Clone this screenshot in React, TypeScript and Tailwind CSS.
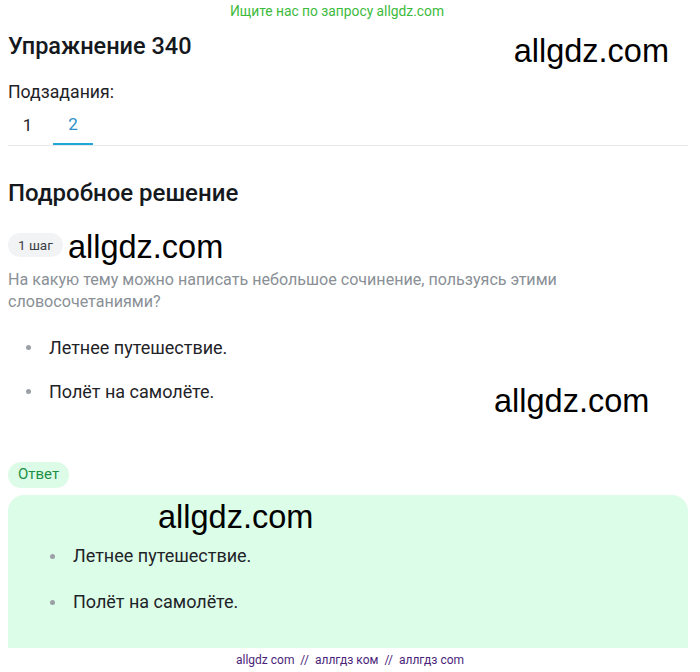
export default function App() {
  const wm = "font-['Liberation_Sans',Arial,sans-serif] text-[32.5px] leading-none text-black";
  const dot = "w-[5px] h-[5px] rounded-full bg-[#9aa0a6] mr-[18px] shrink-0";
  return (
    <div className="relative w-[700px] h-[672px] overflow-hidden bg-white font-['Roboto',sans-serif] text-[#1f2328]">
      <div className="h-[22px] flex items-center justify-center pr-[26px] text-[13.8px] text-[#3dbb3d]">
        Ищите нас по запросу allgdz.com
      </div>
      <div className="px-2">
        <div className="flex items-center justify-between h-[50px]">
          <h1 className="text-[23.5px] font-medium text-[#15191e] leading-none">Упражнение 340</h1>
          <span className={wm + " mr-[23px] mt-[8px]"}>allgdz.com</span>
        </div>
        <div className="mt-[8px] text-[17.7px] leading-[24px]">Подзадания:</div>
        <div className="flex mt-[2px] border-b border-[#e6e8ea] w-[680px]">
          <div className="w-[45px] h-[39px] flex items-center justify-center text-[17px] pr-[6px]">1</div>
          <div className="w-[40px] h-[39px] flex items-center justify-center text-[17px] text-[#2d8fc9] border-b-2 border-[#1ea7d6] mb-[-1px]">2</div>
        </div>
        <h2 className="mt-[33px] text-[24px] font-medium leading-[28px] text-[#15191e]">Подробное решение</h2>
        <div className="mt-[20px] flex items-center gap-[5px]">
          <span className="h-[24px] px-[10px] rounded-full bg-[#f2f3f5] text-[13.5px] text-[#3b4046] flex items-center">1 шаг</span>
          <span className={wm + " mt-[4px]"}>allgdz.com</span>
        </div>
        <p className="mt-[5px] text-[16.1px] leading-[22px] text-[#8a9096] w-[580px]">
          На какую тему можно написать небольшое сочинение, пользуясь этими словосочетаниями?
        </p>
        <div className="relative">
          <ul className="mt-[24px] pl-[18px] text-[18px] leading-[22px] flex flex-col gap-[22px]">
            <li className="flex items-center"><span className={dot} />Летнее путешествие.</li>
            <li className="flex items-center"><span className={dot} />Полёт на самолёте.</li>
          </ul>
          <span className={wm + " absolute left-[486px] top-[48px]"}>allgdz.com</span>
        </div>
        <div className="mt-[59px]">
          <span className="inline-flex h-[26px] px-[10px] items-center rounded-full bg-[#dcfce8] text-[15px] text-[#1f8f45]">Ответ</span>
        </div>
        <div className="mt-[7px] h-[160px] w-[680px] rounded-t-[16px] bg-[#dcfde8]">
          <div className={wm + " pl-[150px] pt-[6px]"}>allgdz.com</div>
          <ul className="mt-[12px] pl-[42px] text-[18px] leading-[22px] flex flex-col gap-[24px]">
            <li className="flex items-center"><span className={dot} />Летнее путешествие.</li>
            <li className="flex items-center"><span className={dot} />Полёт на самолёте.</li>
          </ul>
        </div>
      </div>
      <div className="absolute left-0 right-0 top-[648px] h-[24px] bg-white flex items-center justify-center text-[12px] text-[#4b1f7a]">
        allgdz com&nbsp;&nbsp;//&nbsp;&nbsp;аллгдз ком&nbsp;&nbsp;//&nbsp;&nbsp;аллгдз com
      </div>
    </div>
  );
}
